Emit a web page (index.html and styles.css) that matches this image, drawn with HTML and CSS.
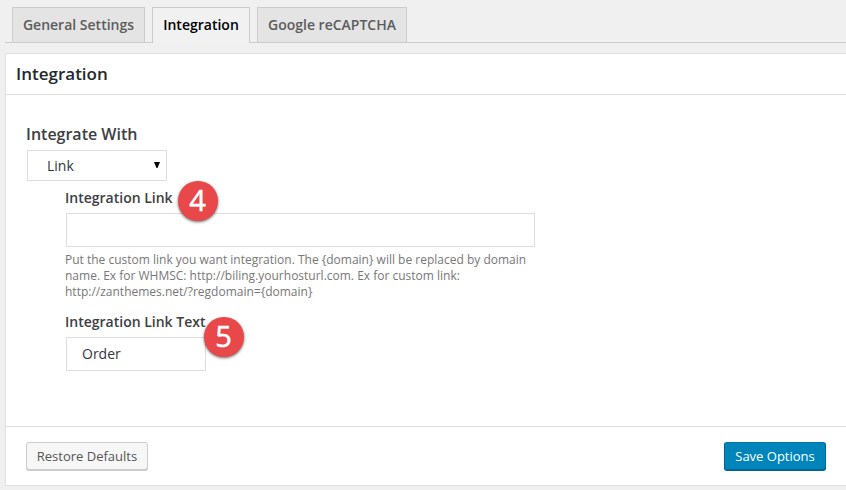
FILE: index.html
```html
<!DOCTYPE html>
<html lang="en">
<head>
<meta charset="utf-8">
<title>Integration</title>
<link rel="stylesheet" href="styles.css">
</head>
<body>
<nav class="tabs">
  <a class="tab t1">General Settings</a>
  <a class="tab active t2">Integration</a>
  <a class="tab t3">Google reCAPTCHA</a>
</nav>
<main class="panel">
  <h3 class="title"><span>Integration</span></h3>
  <section class="body">
    <h4 class="heading"><span>Integrate With</span></h4>
    <div class="select"><span>Link</span><svg width="6" height="6" viewBox="0 0 6 6"><path d="M0 0h6L3.5 6h-1z"/></svg></div>
    <div class="group">
      <label class="label l1"><span>Integration Link</span><b class="badge b4">4</b></label>
      <div class="input wide"></div>
      <p class="help"><span>Put the custom link you want integration. The {domain} will be replaced by domain</span><br><span>name. Ex for WHMSC: http://biling.yourhosturl.com. Ex for custom link:</span><br><span>http://zanthemes.net/?regdomain={domain}</span></p>
      <label class="label l2"><span>Integration Link Text</span><b class="badge b5">5</b></label>
      <div class="input short"><span>Order</span></div>
    </div>
  </section>
  <footer class="footer">
    <button class="btn restore">Restore Defaults</button>
    <button class="btn save">Save Options</button>
  </footer>
</main>
</body>
</html>
```
FILE: styles.css
```css
* { box-sizing: border-box; }
body { margin: 0; height: 490px; overflow: hidden; background: #f0f0f0; font-family: "Open Sans", sans-serif; color: #23282d; }
.tabs { height: 43px; margin-left: 5px; padding: 7px 0 0 7px; border-bottom: 1px solid #ccc; display: flex; gap: 7px; }
.tab { height: 35px; border: 1px solid #ccc; border-bottom: 0; background: #e4e4e4; color: #5c5c5c; font-size: 14px; font-weight: 600; line-height: 34px; text-align: center; white-space: nowrap; }
.t1 { width: 133px; }
.t2 { width: 98px; }
.t3 { width: 150px; }
.tab.active { height: 36px; background: #f1f1f1; color: #000; }
.panel { margin: 10px 0 0 5px; height: 433px; border: 1px solid #e0e0e0; border-right: 0; background: #fff; }
.title { margin: 0; height: 41px; padding-left: 10px; border-bottom: 1px solid #ddd; font-size: 17px; font-weight: 600; line-height: 39px; }
.body { height: 331px; padding: 28px 0 0 20px; }
.heading { margin: 0 0 4px; font-size: 16px; font-weight: 600; line-height: 23px; color: #3c4045; }
.select { margin-left: 1px; width: 140px; height: 31px; border: 1px solid #ddd; padding: 0 6px 0 19px; display: flex; align-items: center; justify-content: space-between; font-size: 14px; color: #32373c; }
.select svg { margin-top: -2px; }
.group { margin: 6px 0 0 39px; }
.label { display: flex; position: relative; width: max-content; font-size: 14px; font-weight: 600; line-height: 22px; color: #3c4045; }
.badge { position: absolute; width: 40px; height: 40px; border-radius: 50%; background: #e9484a; color: #fff; font-size: 29px; font-weight: 400; line-height: 38px; text-align: center; text-indent: -1px; -webkit-text-stroke: .5px #fff; box-shadow: 0 1px 3px rgba(0,0,0,.6); }
.b4 { left: 113px; top: -6px; }
.b5 { left: 139px; top: 6px; }
.input { margin: 4px 0 0 1px; height: 34px; border: 1px solid #ddd; font-size: 14px; line-height: 32px; padding-left: 15px; color: #32373c; }
.wide { width: 469px; }
.short { width: 140px; }
.help { margin: 5px 0 11px; font-size: 12px; line-height: 16px; color: #777; white-space: nowrap; }
.footer { height: 60px; border-top: 1px solid #ddd; padding: 15px 20px 0; display: flex; justify-content: space-between; }
.btn { height: 28px; padding: 0 0 1px; border: 1px solid #ccc; border-radius: 3px; background: #f7f7f7; color: #555; font: 13px "Open Sans", sans-serif; box-shadow: 0 1px 0 #ccc; }
.restore { width: 122px; }
.save { width: 102px; background: #0085ba; border-color: #0073aa #006799 #006799; color: #fff; box-shadow: 0 1px 0 #006799; }
```
